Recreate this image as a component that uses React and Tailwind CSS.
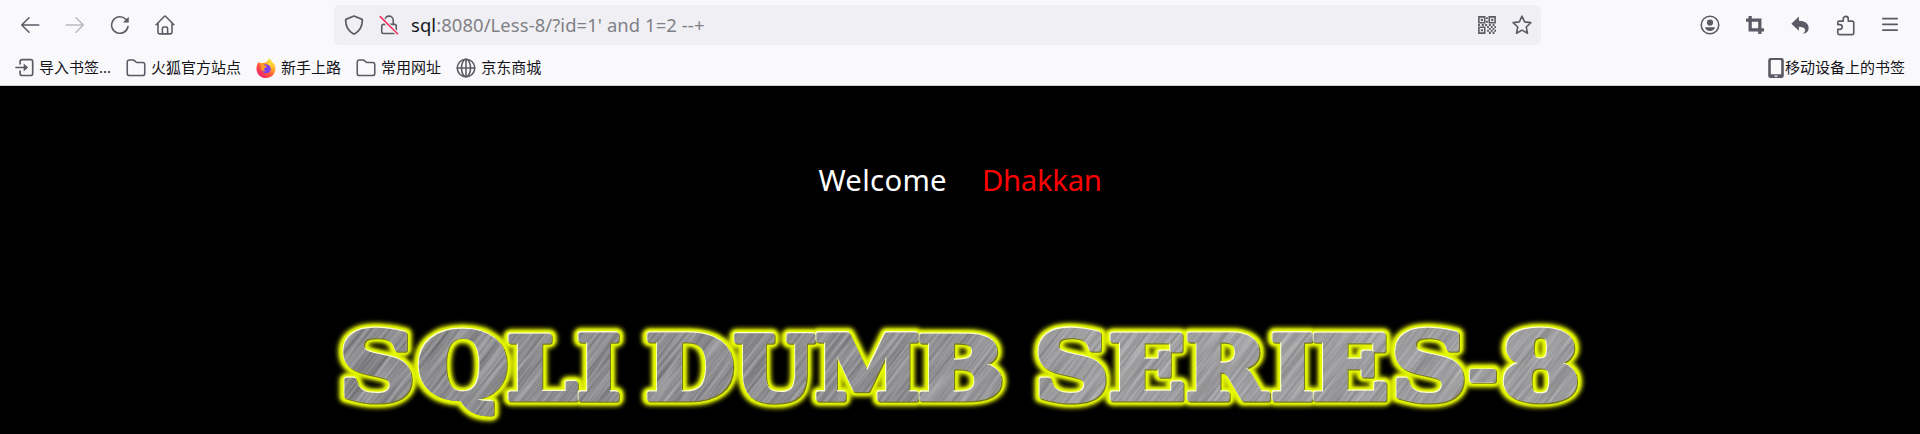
import React from 'react';

/* Ink bounds of each glyph at 100px: [left, right, ascent, descent]. */
const INK = {
  S: [5.4, 67.4, 74.2, 1.4],
  Q: [4.5, 82.8, 74.2, 18.3],
  L: [4.3, 68.3, 72.9, 0],
  I: [4.3, 42.2, 72.9, 0],
  D: [4.3, 82.3, 72.9, 0],
  U: [3.2, 85.4, 72.9, 1.4],
  M: [4, 106.5, 72.9, 0],
  B: [4.3, 79.3, 72.9, 0],
  E: [4.3, 71.6, 72.9, 0],
  R: [4.3, 84.5, 72.9, 0],
  '-': [4.4, 37.2, 34.2, -20],
  8: [4.6, 65, 74.2, 1.4],
};

/* Title letters: [glyph, left, right, top, bottom] */
const LETTERS = [
  ['S', 342, 413, 328, 404],
  ['Q', 419, 507, 328, 417],
  ['L', 508, 578, 333, 402],
  ['I', 578, 619, 333, 402],
  ['D', 647, 733, 333, 402],
  ['U', 734, 816, 333, 404],
  ['M', 816, 919, 333, 402],
  ['B', 919, 1002, 333, 402],
  ['S', 1037, 1107, 328, 404],
  ['E', 1110, 1184, 333, 402],
  ['R', 1187, 1271, 333, 402],
  ['I', 1272, 1313, 333, 402],
  ['E', 1313, 1387, 333, 402],
  ['S', 1394, 1465, 328, 404],
  ['-', 1469, 1497, 368, 383],
  ['8', 1503, 1578, 328, 404],
];

const TOP = 300;
const FAT = 2.8;

function place([g, l, r, t, b]) {
  const [il, ir, ia, id] = INK[g];
  const sx = (r - l - FAT * 2) / (ir - il);
  const sy = (b - t - FAT * 2) / (ia + id);
  return `matrix(${sx} 0 0 ${sy} ${l + FAT - il * sx} ${t - TOP + FAT + ia * sy})`;
}

function Glyph({ l, ...rest }) {
  return (
    <text
      transform={place(l)}
      fontFamily="'DejaVu Serif', serif"
      fontWeight="700"
      fontSize="100"
      strokeLinejoin="round"
      vectorEffect="non-scaling-stroke"
      {...rest}
    >
      {l[0]}
    </text>
  );
}

function Title() {
  return (
    <svg className="block h-[134px] w-full" viewBox="0 0 1920 134" role="img">
      <defs>
        <filter id="glow" x="-5%" y="-30%" width="110%" height="160%">
          <feGaussianBlur stdDeviation="2.2" />
        </filter>
        <filter id="soft" x="-5%" y="-30%" width="110%" height="160%">
          <feGaussianBlur stdDeviation="0.9" />
        </filter>
        <filter id="brushed" x="0" y="0" width="100%" height="100%" colorInterpolationFilters="sRGB">
          <feTurbulence type="fractalNoise" baseFrequency="0.012 0.34" numOctaves="3" seed="8" />
          <feColorMatrix values="0.34 0 0 0 0.38  0.34 0 0 0 0.38  0.34 0 0 0 0.39  0 0 0 0 1" />
        </filter>
        <linearGradient id="sheen" x1="0" x2="1">
          <stop offset="0" stopColor="#fff" stopOpacity="0" />
          <stop offset="0.45" stopColor="#fff" stopOpacity="0.03" />
          <stop offset="0.6" stopColor="#fff" stopOpacity="0.16" />
          <stop offset="1" stopColor="#fff" stopOpacity="0.14" />
        </linearGradient>
        <mask id="letters" maskUnits="userSpaceOnUse" x="320" y="0" width="1280" height="134">
          {LETTERS.map((l, i) => (
            <g key={i}>
              <Glyph l={l} fill="#000" stroke="#000" strokeWidth={FAT * 2 + 1} />
              <Glyph l={l} fill="#fff" stroke="#fff" strokeWidth={FAT * 2 - 0.6} />
            </g>
          ))}
        </mask>
      </defs>
      <g filter="url(#glow)">
        {LETTERS.map((l, i) => (
          <Glyph key={i} l={l} aria-hidden="true" fill="#c8d400" stroke="#c8d400" strokeWidth={FAT * 2 + 10} />
        ))}
      </g>
      <g filter="url(#soft)">
        {LETTERS.map((l, i) => (
          <Glyph key={i} l={l} aria-hidden="true" fill="#e6fa00" stroke="#e6fa00" strokeWidth={FAT * 2 + 6.4} />
        ))}
      </g>
      <g transform="translate(0.8 0.7)">
        {LETTERS.map((l, i) => (
          <Glyph key={i} l={l} aria-hidden="true" fill="#77782a" stroke="#77782a" strokeWidth={FAT * 2} />
        ))}
      </g>
      <g transform="translate(-0.7 -0.7)">
        {LETTERS.map((l, i) => (
          <Glyph key={i} l={l} aria-hidden="true" fill="#fdffd0" stroke="#fdffd0" strokeWidth={FAT * 2} />
        ))}
      </g>
      <g mask="url(#letters)">
        <g transform="translate(960 67) rotate(-52)">
          <rect x="-700" y="-700" width="1400" height="1400" fill="#8c8c8f" filter="url(#brushed)" />
        </g>
        <rect x="320" y="0" width="1280" height="134" fill="url(#sheen)" />
      </g>
    </svg>
  );
}

function Icon({ children, className = 'size-5', sw = 1.25 }) {
  return (
    <svg
      viewBox="0 0 16 16"
      className={`shrink-0 text-[#5b5b66] ${className}`}
      fill="none"
      stroke="currentColor"
      strokeWidth={sw}
      strokeLinecap="round"
      strokeLinejoin="round"
    >
      {children}
    </svg>
  );
}

const Back = () => <Icon><path d="M15 8H1.4M7.2 2.2 1.4 8l5.8 5.8" /></Icon>;
const Forward = () => <Icon className="size-5 opacity-40"><path d="M1 8h13.6M8.800 2.200 14.600 8l-5.800 5.800" /></Icon>;
const Reload = () => (
  <Icon>
    <path d="M14.400 9.200A6.600 6.600 0 1 1 12.600 3.400" />
    <path d="M15 1.300v4.200a.5.5 0 0 1-.5.5h-4.200z" fill="currentColor" stroke="none" />
  </Icon>
);
const Home = () => (
  <Icon>
    <path d="M.9 7.800 7.400 1.200a.9.9 0 0 1 1.200 0l6.500 6.600M2.400 6.600v6.900a1.600 1.600 0 0 0 1.600 1.600h8a1.600 1.600 0 0 0 1.600-1.600V6.600" />
    <path d="M5.900 15v-4.200A1.200 1.200 0 0 1 7.100 9.600h1.800a1.200 1.200 0 0 1 1.200 1.200V15" />
  </Icon>
);
const Shield = () => (
  <Icon className="size-[22px]">
    <path d="M8 1.500 13.500 3.700a.9.9 0 0 1 .6.9c-.1 4.200-1.700 7.600-5.500 9.700a1.200 1.200 0 0 1-1.200 0C3.600 12.200 2 8.800 1.900 4.600a.9.9 0 0 1 .6-.9z" />
  </Icon>
);
const Insecure = () => (
  <Icon>
    <path d="M4.600 7.500V4.300A3.400 3.400 0 0 1 11.400 4.300V7.500M3.600 7.500h8.800a1.400 1.400 0 0 1 1.400 1.400v4.500a1.400 1.400 0 0 1-1.400 1.400H3.600a1.400 1.400 0 0 1-1.400-1.400V8.900a1.400 1.400 0 0 1 1.400-1.400z" />
    <path d="m.8 1.200 14 13.800" stroke="#f0f0f4" strokeWidth="3" />
    <path d="M1 1.300 14.800 15" stroke="#f5305c" />
  </Icon>
);
const Qr = () => (
  <Icon className="size-[18px]" sw={1.4}>
    <g strokeLinejoin="miter">
      <path d="M.8.8h5.200v5.200H.8zM10 .8h5.200v5.200H10zM.8 10h5.200v5.200H.8z" />
    </g>
    <g fill="currentColor" stroke="none">
      <path d="M2.500 2.500h1.900v1.900H2.500zM11.700 2.500h1.900v1.900h-1.900zM2.500 11.700h1.900v1.900H2.500zM7.200 1h1.600v1.700H7.200zM7.200 4.200h1.600v1.800H7.200zM0 7.200h1.700v1.600H0zM3.400 7.200h1.800v1.600H3.400zM6.400 7.200h1.700v1.700H6.400zM9.700 7.200h1.700v1.600H9.700zM13 7.200h1.600v1.700H13z" />
      <path d="M8.100 8.900h1.600v1.700H8.100zM11.400 8.900H13v1.700h-1.600zM14.600 8.900H16v1.700h-1.400zM9.700 10.600h1.700v1.700H9.700zM13 10.600h1.600v1.700H13zM8.100 12.300h1.600v1.800H8.100zM11.400 12.300H13v1.800h-1.600zM14.600 12.300H16v1.800h-1.400zM9.700 14.100h1.700V16H9.700zM13 14.100h1.600V16H13z" />
    </g>
  </Icon>
);
const Star = () => (
  <Icon>
    <path d="m8 .9 2.100 4.600 5 .6-3.700 3.500 1 5L8 12.100l-4.400 2.500 1-5L.9 6.100l5-.6z" />
  </Icon>
);
const Account = () => (
  <Icon>
    <circle cx="8" cy="8" r="7" />
    <circle cx="8" cy="6" r="2.500" fill="currentColor" stroke="none" />
    <path d="M3.900 9.800h8.200c-.4 1.900-2 3-4.100 3s-3.700-1.100-4.100-3z" fill="currentColor" stroke="none" />
  </Icon>
);
const Crop = () => (
  <Icon className="size-[18px]" sw={2.9}>
    <path d="M3.700 0v12.300H16M0 3.700h12.300V16" strokeLinecap="butt" strokeLinejoin="miter" />
  </Icon>
);
const Undo = () => (
  <Icon className="size-[18px]">
    <path d="M7 .4v3.900c5.400 0 8.700 2.700 8.700 6.500 0 2.500-1.700 4.200-4.400 4.900-.3.100-.5-.2-.2-.4 2.900-2.400 1.600-5.800-4.100-5.800v3.700L.3 6.800z" fill="currentColor" stroke="none" />
  </Icon>
);
const Puzzle = () => (
  <Icon className="size-[21px]">
    <path d="M6.300 4.700V3a1.900 1.900 0 0 1 3.800 0v1.700h3a1.200 1.200 0 0 1 1.200 1.200v7.900a1.200 1.200 0 0 1-1.200 1.200H3.300a1.200 1.200 0 0 1-1.200-1.200v-2.900h1.600a1.800 1.800 0 0 0 0-3.600H2.100V5.900a1.200 1.200 0 0 1 1.200-1.200z" />
  </Icon>
);
const Menu = () => (
  <Icon><path d="M2.200 2.900h11.600M2.200 7.500h11.600M2.200 12.100h11.600" /></Icon>
);
const Import = () => (
  <Icon className="size-[19px]" sw={1.4}>
    <path d="M4.300 5V3a1.700 1.700 0 0 1 1.700-1.700h7.200A1.700 1.700 0 0 1 14.900 3v10a1.700 1.700 0 0 1-1.700 1.700H6A1.700 1.700 0 0 1 4.300 13v-2M.8 8h7" />
    <path d="M7.300 4.600 11 8l-3.700 3.400z" fill="currentColor" stroke="none" />
  </Icon>
);
const Folder = () => (
  <Icon>
    <path d="M1 3.300a1.700 1.700 0 0 1 1.700-1.700h2.900c.5 0 .9.200 1.200.5l1.100 1.100c.3.300.6.400 1 .4h4.400A1.700 1.700 0 0 1 15 5.300v7a1.700 1.700 0 0 1-1.700 1.700H2.700A1.700 1.700 0 0 1 1 12.300z" />
  </Icon>
);
const Globe = () => (
  <Icon>
    <circle cx="8" cy="8" r="7" />
    <ellipse cx="8" cy="8" rx="3.600" ry="7" />
    <path d="M1 8h14M8 1v14" />
  </Icon>
);

function Phone() {
  return (
    <svg viewBox="0 0 16 20" className="h-5 w-4 shrink-0 text-[#5b5b66]" fill="currentColor">
      <path
        fillRule="evenodd"
        d="M2.500 0h11A2.300 2.300 0 0 1 15.800 2.300v15.400a2.300 2.300 0 0 1-2.300 2.300h-11A2.300 2.300 0 0 1 .2 17.700V2.300A2.300 2.300 0 0 1 2.500 0zM3.800 2a1 1 0 0 0-1 1v13.300h10.400V3a1 1 0 0 0-1-1zM6.500 17.500v1.300h3v-1.300z"
      />
    </svg>
  );
}

function Firefox() {
  return (
    <svg viewBox="0 0 20 20" className="size-5 shrink-0">
      <defs>
        <linearGradient id="ff" x1="0.85" y1="0.1" x2="0.2" y2="0.95">
          <stop offset="0" stopColor="#fff44f" />
          <stop offset="0.3" stopColor="#ffb02a" />
          <stop offset="0.6" stopColor="#ff5a36" />
          <stop offset="1" stopColor="#f01c6e" />
        </linearGradient>
      </defs>
      <path d="M13.200 0c1.600 1.300 2.400 2.600 2.900 4 2.400 1.500 3.500 4.300 3.400 7C19.200 16.200 15.200 20 10 20S.6 16.100.5 10.900C.4 8 1.300 5.400 3.200 3.400c.1 1 .3 1.500.7 2 1-.6 2.100-.6 3.100-.3C9.500 5 10 4.300 11 3.300 12 2.300 12.800 1.300 13.200 0z" fill="url(#ff)" />
      <circle cx="10.200" cy="10.800" r="4.500" fill="#7b3ff2" />
      <path d="M3.800 5.600c1.600-.7 3-.5 4.200.3-.2 1.100.4 1.600 1.800 1.800 1 .2 1.200.6.900 1-.8.900-2.100.9-2.600 2-.3 1.200.5 2 1.900 2.200-2 .9-4.700-.1-5.100-2.500-.2-1.700-.1-3.300-1.100-4.800z" fill="#ff9a28" />
      <path d="M11 6.200c2.500.3 4.300 2.200 4.100 4.700 1-2.500.3-5.600-2-7z" fill="#ffd83a" />
    </svg>
  );
}

function Bookmark({ icon, label }) {
  return (
    <div className="flex items-center gap-[5px]">
      {icon}
      <span className="-mt-0.5">{label}</span>
    </div>
  );
}

export default function App() {
  return (
    <div className="flex h-[434px] w-full flex-col overflow-hidden bg-black">
      <header className="flex h-[86px] shrink-0 flex-col border-b border-[#cccccc] bg-[#f9f9fb]">
        <div className="flex h-[50px] shrink-0 items-center pl-5">
          <nav className="flex w-[314px] shrink-0 items-center gap-[25px]">
            <Back />
            <Forward />
            <Reload />
            <Home />
          </nav>
          <div className="flex h-10 w-[1207px] shrink-0 items-center rounded-[5px] bg-[#f0f0f4] px-[9px]">
            <Shield />
            <div className="ml-[14px] flex"><Insecure /></div>
            <div className="ml-[12px] grow whitespace-pre font-['Noto_Sans','Open_Sans',sans-serif] text-[18.4px] leading-10 tracking-[0.1px] text-[#808086]">
              <span className="text-[#15141a]">sql</span>:8080/Less-8/?id=1' and 1=2 --+
            </div>
            <div className="flex items-center gap-[16px]">
              <Qr />
              <Star />
            </div>
          </div>
          <div className="flex grow items-center justify-end gap-[25px] pr-5">
            <Account />
            <div className="flex w-5 justify-center"><Crop /></div>
            <div className="flex w-5 justify-center"><Undo /></div>
            <div className="flex w-5 justify-center"><Puzzle /></div>
            <Menu />
          </div>
        </div>
        <div className="flex grow items-center justify-between pr-[15px] pl-[15px] font-['Noto_Sans_CJK_SC',sans-serif] text-[15px] leading-5 text-[#15141a]">
          <div className="flex items-center gap-[15px]">
            <Bookmark icon={<Import />} label={<>导入书签<span className="font-['Noto_Sans',sans-serif]">...</span></>} />
            <Bookmark icon={<Folder />} label="火狐官方站点" />
            <Bookmark icon={<Firefox />} label="新手上路" />
            <Bookmark icon={<Folder />} label="常用网址" />
            <Bookmark icon={<Globe />} label="京东商城" />
          </div>
          <div className="flex items-center gap-px">
            <Phone />
            <span className="-mt-0.5">移动设备上的书签</span>
          </div>
        </div>
      </header>
      <main className="flex grow flex-col">
        <div className="flex h-[214px] shrink-0 justify-center gap-[35px] pt-[74px] font-['Noto_Sans','Open_Sans',sans-serif] text-[29.3px] leading-10">
          <span className="tracking-[0.3px] text-white">Welcome</span>
          <span className="tracking-[-0.3px] text-[#ff0000]">Dhakkan</span>
        </div>
        <Title />
      </main>
    </div>
  );
}
